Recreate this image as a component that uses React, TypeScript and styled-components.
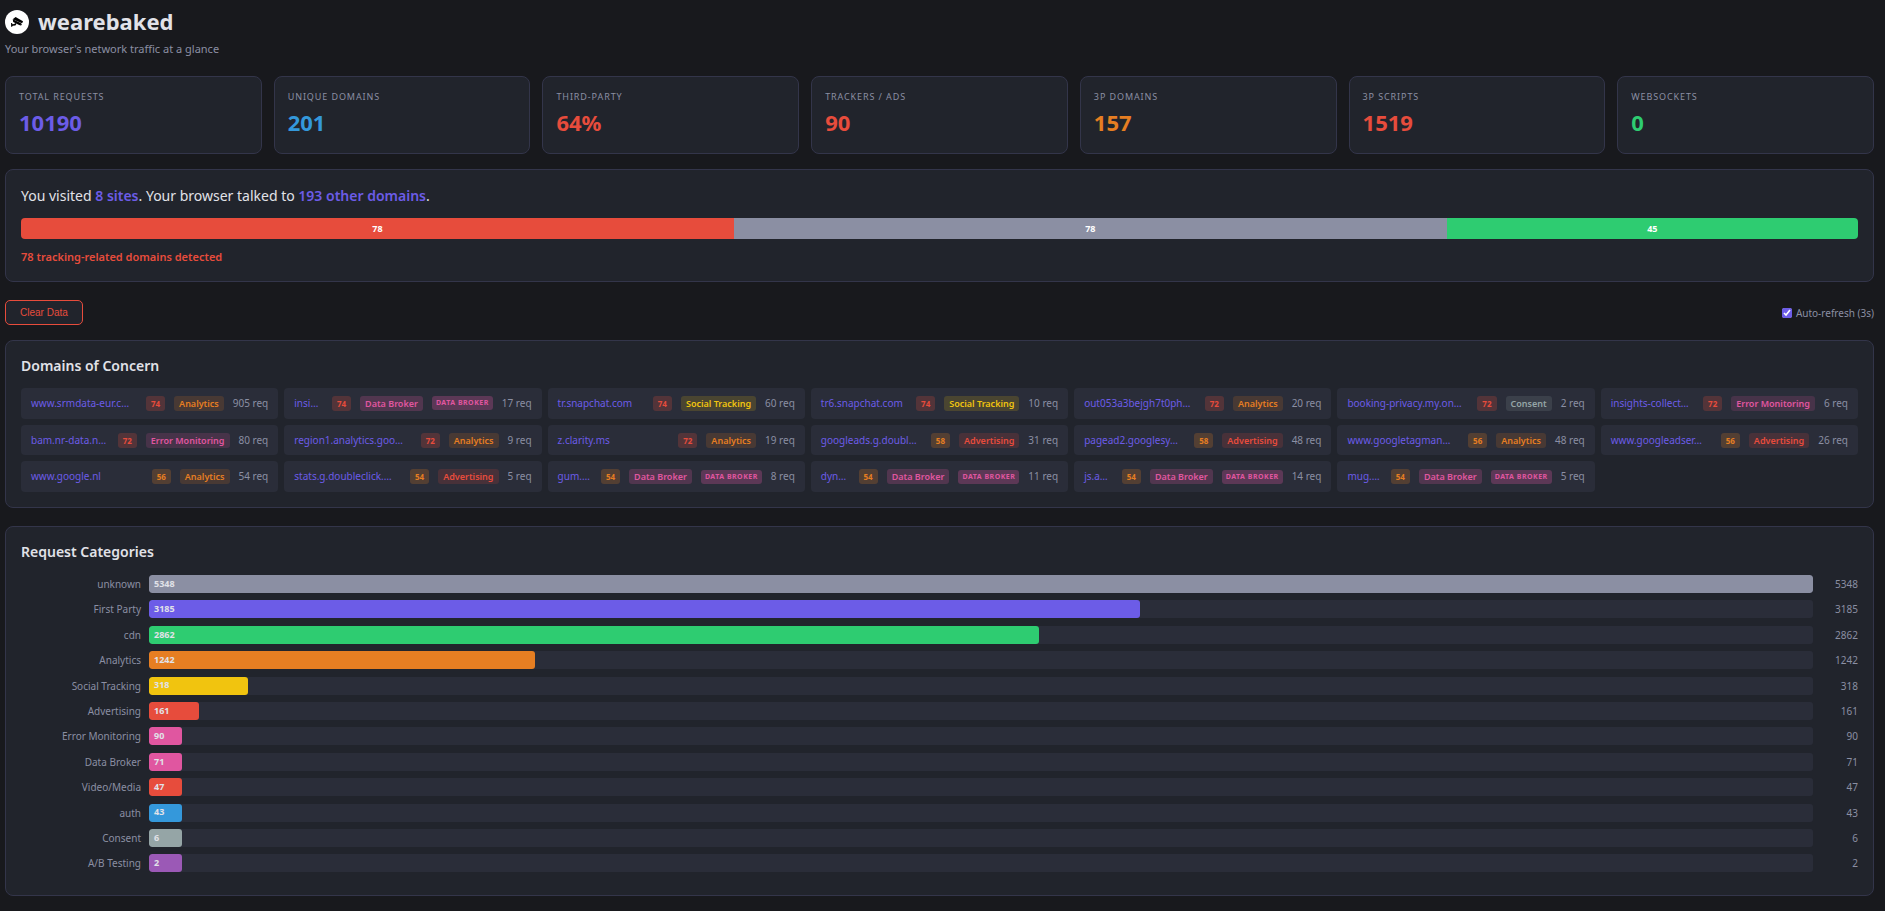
import { useState } from 'react'
import styled, { createGlobalStyle, ThemeProvider } from 'styled-components'

const theme = {
  colors: {
    bg: '#18191d',
    surface: '#21242c',
    surfaceAlt: '#2a2d39',
    border: '#33354a',
    text: '#e1e2e8',
    muted: '#8b8fa3',
    purple: '#6c5ce7',
    blue: '#3498db',
    red: '#e74c3c',
    orange: '#e67e22',
    green: '#2ecc71',
    yellow: '#f1c40f',
    pink: '#e056a0',
    grey: '#95a5a6',
    violet: '#9b59b6',
  },
  fonts: {
    body: "'Noto Sans', sans-serif",
    control: "'Liberation Sans', Arial, sans-serif",
  },
}

type Color = keyof typeof theme.colors

const GlobalStyle = createGlobalStyle`
  *, *::before, *::after {
    box-sizing: border-box;
  }

  body {
    margin: 0;
    background: ${theme.colors.bg};
    color: ${theme.colors.text};
    font-family: ${theme.fonts.body};
    font-size: 10px;
  }
`

const Page = styled.main`
  padding: 10px 11px 14px 5px;
`

const Header = styled.header`
  margin-bottom: 18px;
`

const Brand = styled.div`
  display: flex;
  align-items: flex-start;
  gap: 9px;
`

const Title = styled.h1`
  margin: 0;
  font-size: 22px;
  line-height: 22px;
  font-weight: 700;
`

const Subtitle = styled.p`
  margin: 6px 0 0;
  font-size: 11px;
  line-height: 18px;
  color: ${({ theme }) => theme.colors.muted};
`

const Stats = styled.section`
  display: grid;
  grid-template-columns: repeat(7, 1fr);
  gap: 12px;
  margin-bottom: 15px;
`

const StatCard = styled.div`
  padding: 13px 13px 15px;
  background: ${({ theme }) => theme.colors.surface};
  border: 1px solid ${({ theme }) => theme.colors.border};
  border-radius: 8px;
`

const StatLabel = styled.div`
  margin-bottom: 3px;
  font-size: 9px;
  line-height: 14px;
  letter-spacing: 0.1em;
  text-transform: uppercase;
  color: ${({ theme }) => theme.colors.muted};
`

const StatValue = styled.div<{ $color: Color }>`
  font-size: 22px;
  line-height: 31px;
  font-weight: 700;
  color: ${({ theme, $color }) => theme.colors[$color]};
`

const Panel = styled.section`
  margin-bottom: 18px;
  padding: 15px;
  background: ${({ theme }) => theme.colors.surface};
  border: 1px solid ${({ theme }) => theme.colors.border};
  border-radius: 8px;

  &:last-child {
    margin-bottom: 0;
  }
`

const PanelTitle = styled.h2`
  margin: 0 0 12px;
  font-size: 14px;
  line-height: 20px;
  font-weight: 600;
`

const Summary = styled.p`
  margin: 0 0 11px;
  font-size: 14px;
  line-height: 22px;

  strong {
    font-weight: 600;
    color: ${({ theme }) => theme.colors.purple};
  }
`

const SplitBar = styled.div`
  display: flex;
  height: 21px;
  border-radius: 4px;
  overflow: hidden;
`

const Segment = styled.div<{ $color: Color }>`
  display: flex;
  align-items: center;
  justify-content: center;
  background: ${({ theme, $color }) => theme.colors[$color]};
  color: #fff;
  font-size: 9px;
  font-weight: 700;
`

const Warning = styled.p`
  margin: 9px 0 1px;
  font-size: 11px;
  line-height: 17px;
  font-weight: 600;
  color: ${({ theme }) => theme.colors.red};
`

const Toolbar = styled.div`
  display: flex;
  align-items: center;
  justify-content: space-between;
  margin-bottom: 15px;
`

const ClearButton = styled.button`
  height: 25px;
  padding: 0 14px;
  background: ${({ theme }) => theme.colors.surface};
  border: 1px solid ${({ theme }) => theme.colors.red};
  border-radius: 5px;
  color: ${({ theme }) => theme.colors.red};
  font-family: ${({ theme }) => theme.fonts.control};
  font-size: 10px;
  cursor: pointer;
`

const AutoRefresh = styled.label`
  display: flex;
  align-items: center;
  gap: 4px;
  color: ${({ theme }) => theme.colors.muted};
  cursor: pointer;

  input {
    width: 10px;
    height: 10px;
    margin: 0;
    accent-color: ${({ theme }) => theme.colors.purple};
  }
`

const DomainGrid = styled.div`
  display: grid;
  grid-template-columns: repeat(7, 1fr);
  gap: 6px;
`

const DomainRow = styled.div`
  display: flex;
  align-items: center;
  gap: 9px;
  min-width: 0;
  padding: 7px 10px;
  background: ${({ theme }) => theme.colors.surfaceAlt};
  border-radius: 4px;
  line-height: 1.67;
  white-space: nowrap;
`

const DomainName = styled.a`
  flex: 1;
  min-width: 0;
  color: ${({ theme }) => theme.colors.purple};
  text-decoration: none;
`

const Badge = styled.span<{ $color: Color }>`
  padding: 0 5px;
  border-radius: 3px;
  background: ${({ theme, $color }) => theme.colors[$color]}38;
  color: ${({ theme, $color }) => theme.colors[$color]};
  font-size: 8px;
  line-height: 15px;
  font-weight: 700;
`

const Category = styled(Badge)<{ $strong: boolean }>`
  background: ${({ theme, $color, $strong }) =>
    theme.colors[$color] + ($strong ? '38' : '29')};
  font-size: 9px;
  font-weight: 600;
`

const BrokerTag = styled(Badge)`
  padding: 0 4px;
  background: ${({ theme, $color }) => theme.colors[$color]}47;
  font-size: 7px;
  line-height: 14px;
  letter-spacing: 0.07em;
  text-transform: uppercase;
`

const RequestCount = styled.span`
  color: ${({ theme }) => theme.colors.muted};
`

const Bars = styled.div`
  margin-top: 13px;
`

const BarRow = styled.div`
  display: grid;
  grid-template-columns: 120px 1fr 37px;
  column-gap: 8px;
  align-items: start;
  margin-bottom: 7px;
  line-height: 1.84;
  color: ${({ theme }) => theme.colors.muted};
`

const BarText = styled.span`
  text-align: right;
`

const Track = styled.div`
  height: 18px;
  border-radius: 3px;
  overflow: hidden;
  background: ${({ theme }) => theme.colors.surfaceAlt};
`

const Fill = styled.div<{ $color: Color }>`
  display: flex;
  align-items: center;
  height: 100%;
  min-width: 2%;
  padding: 0 5px;
  border-radius: 3px;
  background: ${({ theme, $color }) => theme.colors[$color]};
  color: ${({ theme }) => theme.colors.text};
  font-size: 9px;
  font-weight: 700;
`

const stats: { label: string; value: string; color: Color }[] = [
  { label: 'Total Requests', value: '10190', color: 'purple' },
  { label: 'Unique Domains', value: '201', color: 'blue' },
  { label: 'Third-Party', value: '64%', color: 'red' },
  { label: 'Trackers / Ads', value: '90', color: 'red' },
  { label: '3P Domains', value: '157', color: 'orange' },
  { label: '3P Scripts', value: '1519', color: 'red' },
  { label: 'WebSockets', value: '0', color: 'green' },
]

const segments: { count: number; color: Color }[] = [
  { count: 78, color: 'red' },
  { count: 78, color: 'muted' },
  { count: 45, color: 'green' },
]

const categoryColors: Record<string, Color> = {
  unknown: 'muted',
  'First Party': 'purple',
  cdn: 'green',
  Analytics: 'orange',
  'Social Tracking': 'yellow',
  Advertising: 'red',
  'Error Monitoring': 'pink',
  'Data Broker': 'pink',
  'Video/Media': 'red',
  auth: 'blue',
  Consent: 'grey',
  'A/B Testing': 'violet',
}

const domains: [name: string, score: number, category: string, requests: number][] = [
  ['www.srmdata-eur.c…', 74, 'Analytics', 905],
  ['insi…', 74, 'Data Broker', 17],
  ['tr.snapchat.com', 74, 'Social Tracking', 60],
  ['tr6.snapchat.com', 74, 'Social Tracking', 10],
  ['out053a3bejgh7t0ph…', 72, 'Analytics', 20],
  ['booking-privacy.my.on…', 72, 'Consent', 2],
  ['insights-collect…', 72, 'Error Monitoring', 6],
  ['bam.nr-data.n…', 72, 'Error Monitoring', 80],
  ['region1.analytics.goo…', 72, 'Analytics', 9],
  ['z.clarity.ms', 72, 'Analytics', 19],
  ['googleads.g.doubl…', 58, 'Advertising', 31],
  ['pagead2.googlesy…', 58, 'Advertising', 48],
  ['www.googletagman…', 56, 'Analytics', 48],
  ['www.googleadser…', 56, 'Advertising', 26],
  ['www.google.nl', 56, 'Analytics', 54],
  ['stats.g.doubleclick.…', 54, 'Advertising', 5],
  ['gum.…', 54, 'Data Broker', 8],
  ['dyn…', 54, 'Data Broker', 11],
  ['js.a…', 54, 'Data Broker', 14],
  ['mug.…', 54, 'Data Broker', 5],
]

const requestCategories: [name: string, count: number][] = [
  ['unknown', 5348],
  ['First Party', 3185],
  ['cdn', 2862],
  ['Analytics', 1242],
  ['Social Tracking', 318],
  ['Advertising', 161],
  ['Error Monitoring', 90],
  ['Data Broker', 71],
  ['Video/Media', 47],
  ['auth', 43],
  ['Consent', 6],
  ['A/B Testing', 2],
]

const maxCount = Math.max(...requestCategories.map(([, count]) => count))
const segmentTotal = segments.reduce((sum, { count }) => sum + count, 0)

const Logo = () => (
  <svg width="24" height="24" viewBox="0 0 24 24" aria-hidden="true">
    <circle cx="12" cy="12" r="12" fill="#fff" />
    <path d="M10.6 6.9 18 11.2l-.5 1.6-1.2.3-8.6-3.9z" fill="#000" />
    <path d="m7.8 9.3 8.4 4-1.6 2-6.4-3.4z" fill="#000" />
    <path d="m15.4 13.4 1.5.4-.5 1.5-1.5.2z" fill="#000" />
    <path d="M6.1 12.9l.9.2.5 1.1 1.9-.1.7-1.2 1.5.8-1.2 1.7-2.6.3-.8 1H6.1z" fill="#000" />
  </svg>
)

const App = () => {
  const [autoRefresh, setAutoRefresh] = useState(true)

  return (
    <ThemeProvider theme={theme}>
      <GlobalStyle />
      <Page>
        <Header>
          <Brand>
            <Logo />
            <Title>wearebaked</Title>
          </Brand>
          <Subtitle>Your browser's network traffic at a glance</Subtitle>
        </Header>

        <Stats>
          {stats.map(({ label, value, color }) => (
            <StatCard key={label}>
              <StatLabel>{label}</StatLabel>
              <StatValue $color={color}>{value}</StatValue>
            </StatCard>
          ))}
        </Stats>

        <Panel>
          <Summary>
            You visited <strong>8 sites</strong>. Your browser talked to{' '}
            <strong>193 other domains</strong>.
          </Summary>
          <SplitBar>
            {segments.map(({ count, color }) => (
              <Segment
                key={color}
                $color={color}
                style={{ width: `${(count / segmentTotal) * 100}%` }}
              >
                {count}
              </Segment>
            ))}
          </SplitBar>
          <Warning>78 tracking-related domains detected</Warning>
        </Panel>

        <Toolbar>
          <ClearButton type="button">Clear Data</ClearButton>
          <AutoRefresh>
            <input
              type="checkbox"
              checked={autoRefresh}
              onChange={(e) => setAutoRefresh(e.target.checked)}
            />
            Auto-refresh (3s)
          </AutoRefresh>
        </Toolbar>

        <Panel>
          <PanelTitle>Domains of Concern</PanelTitle>
          <DomainGrid>
            {domains.map(([name, score, category, requests]) => (
              <DomainRow key={name}>
                <DomainName href="#">{name}</DomainName>
                <Badge $color={score >= 70 ? 'red' : 'orange'}>{score}</Badge>
                <Category
                  $color={categoryColors[category]}
                  $strong={category === 'Data Broker'}
                >
                  {category}
                </Category>
                {category === 'Data Broker' && (
                  <BrokerTag $color="pink">Data Broker</BrokerTag>
                )}
                <RequestCount>{requests} req</RequestCount>
              </DomainRow>
            ))}
          </DomainGrid>
        </Panel>

        <Panel>
          <PanelTitle>Request Categories</PanelTitle>
          <Bars>
            {requestCategories.map(([name, count]) => (
              <BarRow key={name}>
                <BarText>{name}</BarText>
                <Track>
                  <Fill
                    $color={categoryColors[name]}
                    style={{ width: `${(count / maxCount) * 100}%` }}
                  >
                    {count}
                  </Fill>
                </Track>
                <BarText>{count}</BarText>
              </BarRow>
            ))}
          </Bars>
        </Panel>
      </Page>
    </ThemeProvider>
  )
}

export default App
